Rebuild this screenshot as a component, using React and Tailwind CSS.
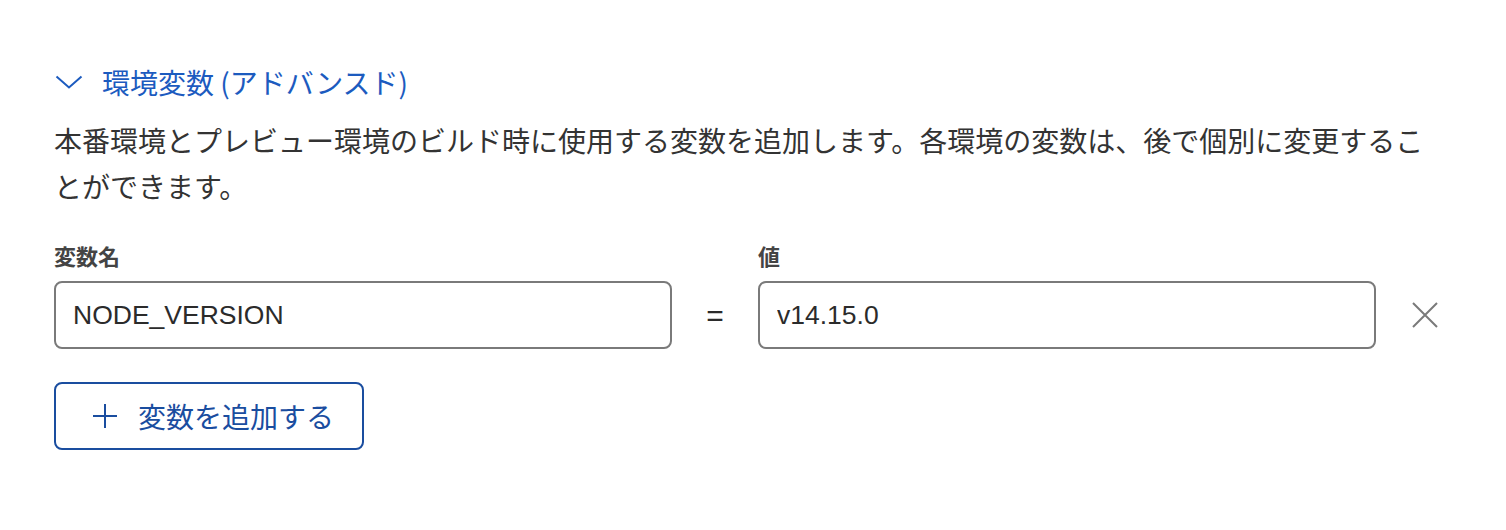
import React, { useState } from 'react';

const jp = { fontFamily: '"Noto Sans CJK JP", "Noto Sans", sans-serif' };
const latin = { fontFamily: '"Liberation Sans", "Noto Sans CJK JP", sans-serif' };

const EnvVarsSection = () => {
  const [open, setOpen] = useState(true);
  const [vars, setVars] = useState([{ name: 'NODE_VERSION', value: 'v14.15.0' }]);

  return (
    <div className="min-h-screen bg-white px-[54px] pt-[62px]" style={jp}>
      <button
        type="button"
        onClick={() => setOpen(!open)}
        className="flex items-center h-[40px] text-[#1c5bbf]"
      >
        <svg width="28" height="14" viewBox="0 0 28 14" fill="none" className="ml-[1px]">
          <path d="M1.5 1.5 L14 12.5 L26.5 1.5" stroke="currentColor" strokeWidth="2" />
        </svg>
        <span className="ml-[19px] text-[28px]">環境変数 (アドバンスド)</span>
      </button>

      {open && (
        <>
          <p className="mt-[15px] w-[1390px] text-[28px] leading-[46px] text-[#333]">
            本番環境とプレビュー環境のビルド時に使用する変数を追加します。各環境の変数は、後で個別に変更することができます。
          </p>

          <div className="mt-[31px] grid grid-cols-[618px_86px_618px_98px] gap-y-[11px]">
            <label className="text-[22px] leading-[30px] font-bold text-[#444]">変数名</label>
            <div />
            <label className="text-[22px] leading-[30px] font-bold text-[#444]">値</label>
            <div />

            {vars.map((v, i) => (
              <React.Fragment key={i}>
                <input
                  value={v.name}
                  onChange={e => setVars(vars.map((x, j) => (j === i ? { ...x, name: e.target.value } : x)))}
                  className="h-[68px] rounded-[8px] border-2 border-[#7a7a7a] px-[17px] text-[26.5px] text-[#2b2b2b] outline-none"
                  style={latin}
                />
                <div className="flex items-center justify-center text-[30px] text-[#2b2b2b]" style={latin}>=</div>
                <input
                  value={v.value}
                  onChange={e => setVars(vars.map((x, j) => (j === i ? { ...x, value: e.target.value } : x)))}
                  className="h-[68px] rounded-[8px] border-2 border-[#7a7a7a] px-[17px] text-[26.5px] text-[#2b2b2b] outline-none"
                  style={latin}
                />
                <div className="flex items-center justify-center">
                  <button type="button" onClick={() => setVars(vars.filter((_, j) => j !== i))} className="text-[#7a7a7a]">
                    <svg width="26" height="26" viewBox="0 0 26 26" fill="none">
                      <path d="M1 1 L25 25 M25 1 L1 25" stroke="currentColor" strokeWidth="2" />
                    </svg>
                  </button>
                </div>
              </React.Fragment>
            ))}
          </div>

          <button
            type="button"
            onClick={() => setVars([...vars, { name: '', value: '' }])}
            className="mt-[33px] flex items-center h-[68px] w-[310px] rounded-[8px] border-2 border-[#1a4d9f] text-[#1a4d9f] pl-[37px]"
          >
            <svg width="24" height="24" viewBox="0 0 24 24" fill="none">
              <path d="M12 0 V24 M0 12 H24" stroke="currentColor" strokeWidth="2" />
            </svg>
            <span className="ml-[21px] text-[28px]">変数を追加する</span>
          </button>
        </>
      )}
    </div>
  );
};

export default function App() {
  return <EnvVarsSection />;
}
